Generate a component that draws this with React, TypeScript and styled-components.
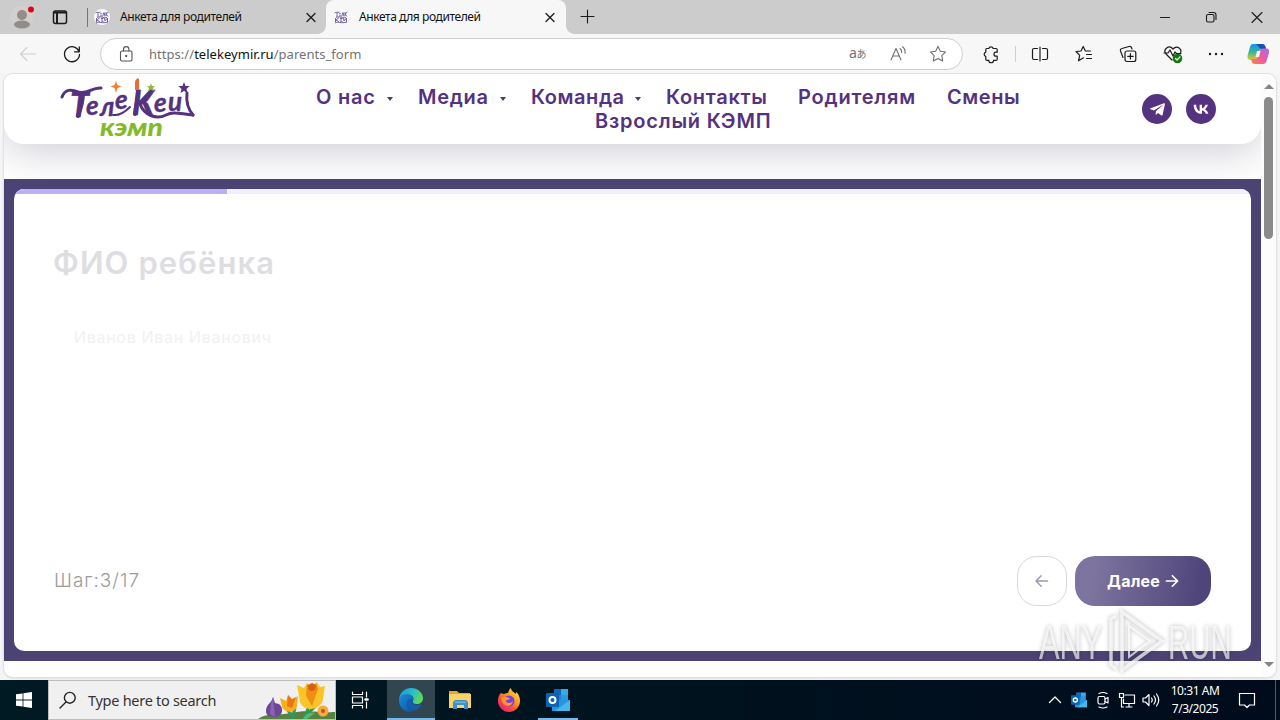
import React from "react";
import styled, { createGlobalStyle, css } from "styled-components";
import { FaTelegramPlane } from "react-icons/fa";

const theme = {
  colors: {
    strip: "#cccccc",
    chrome: "#f7f7f7",
    ink: "#1b1b1b",
    muted: "#6f6f6f",
    brand: "#54327f",
    plum: "#4c4375",
    lilac: "#bcb0f3",
  },
  ui: `"Noto Sans", "Open Sans", sans-serif`,
  site: `Inter, "Open Sans", sans-serif`,
};

const GlobalStyle = createGlobalStyle`
  * {
    box-sizing: border-box;
  }
  body {
    margin: 0;
    overflow: hidden;
    font-family: ${theme.ui};
  }
  svg {
    display: block;
    flex: none;
  }
`;

const Desktop = styled.div`
  position: relative;
  display: flex;
  flex-direction: column;
  width: 1280px;
  height: 720px;
  overflow: hidden;
  background: #f5f5f7;
`;

const Slot = styled.div<{ $w: number }>`
  display: flex;
  align-items: center;
  justify-content: center;
  flex: none;
  width: ${({ $w }) => $w}px;
  height: 100%;
`;

const Spacer = styled.div`
  flex: 1;
`;

/* Tab strip */

const TabStrip = styled.div`
  display: flex;
  height: 34px;
  flex: none;
  padding-left: 2px;
  background: ${theme.colors.strip};
`;

const Tab = styled.div<{ $active?: boolean }>`
  position: relative;
  display: flex;
  align-items: center;
  width: ${({ $active }) => ($active ? 240 : 239)}px;
  height: 34px;
  padding-left: 7px;
  ${({ $active }) =>
    $active
      ? css`
          background: ${theme.colors.chrome};
          border-radius: 8px 8px 0 0;
          &::before,
          &::after {
            content: "";
            position: absolute;
            bottom: 0;
            width: 8px;
            height: 8px;
          }
          &::before {
            left: -8px;
            background: radial-gradient(
              circle at 0 0,
              transparent 7.5px,
              ${theme.colors.chrome} 8px
            );
          }
          &::after {
            right: -8px;
            background: radial-gradient(
              circle at 100% 0,
              transparent 7.5px,
              ${theme.colors.chrome} 8px
            );
          }
        `
      : css`
          &::before {
            content: "";
            width: 1px;
            height: 19px;
            margin: 0 6px 0 -7px;
            background: #777;
          }
        `}
`;

const TabTitle = styled.span`
  flex: 1;
  margin-left: 10px;
  padding-bottom: 1px;
  font-size: 12px;
  letter-spacing: -0.42px;
  white-space: nowrap;
  color: #111;
`;

/* Toolbar */

const Toolbar = styled.div`
  display: flex;
  align-items: center;
  height: 39px;
  flex: none;
  padding: 0 2px 0 8px;
  background: ${theme.colors.chrome};
`;

const AddressBar = styled.div`
  display: flex;
  align-items: center;
  width: 863px;
  height: 32px;
  margin: 1px 8px 0;
  padding: 0 4px 0 10px;
  border: 1px solid #cfcfcf;
  border-radius: 16px;
  background: white;
`;

const Url = styled.span`
  flex: 1;
  margin-left: 9px;
  font-size: 13px;
  letter-spacing: 0.04px;
  color: #737373;
  b {
    font-weight: 400;
    color: #111;
  }
`;

const Divider = styled.div`
  width: 1px;
  height: 16px;
  margin: 0 4px;
  background: #cfcfcf;
`;

/* Web page */

const PageFrame = styled.div`
  display: flex;
  width: 1272px;
  height: 603px;
  flex: none;
  margin: 1px 0 0 4px;
  overflow: hidden;
  border-radius: 9px;
  background: white;
  box-shadow: 0 0 0 1px #e2e2e4, 0 1px 3px rgba(0, 0, 0, 0.16);
`;

const Page = styled.div`
  display: flex;
  flex-direction: column;
  width: 1257px;
  font-family: ${theme.site};
`;

const SiteHeader = styled.header`
  display: flex;
  height: 70px;
  flex: none;
  padding-left: 52px;
  border-radius: 0 0 20px 20px;
  background: white;
  box-shadow: 0 8px 40px rgba(35, 30, 65, 0.22);
`;

const Nav = styled.nav`
  display: flex;
  flex-direction: column;
  width: 719px;
  margin-left: 105px;
  padding-top: 11px;
  font-size: 20px;
  font-weight: 600;
  line-height: 24px;
  color: ${theme.colors.brand};
`;

const NavRow = styled.div<{ $second?: boolean }>`
  display: flex;
  padding-left: ${({ $second }) => ($second ? 279 : 0)}px;
`;

const NavItem = styled.a<{ $w: number; $spacing: number; $menu?: boolean }>`
  display: flex;
  align-items: center;
  width: ${({ $w }) => $w}px;
  white-space: nowrap;
  letter-spacing: ${({ $spacing }) => $spacing}px;
  ${({ $menu }) =>
    $menu &&
    css`
      justify-content: space-between;
      padding-right: 25px;
      &::after {
        content: "";
        margin-top: 4px;
        border: 3px solid transparent;
        border-top: 4px solid ${theme.colors.brand};
        border-bottom: 0;
      }
    `}
`;

const Socials = styled.div`
  display: flex;
  gap: 14px;
  margin: 20px 0 0 120px;
`;

const SocialLink = styled.a`
  display: flex;
  align-items: center;
  justify-content: center;
  width: 30px;
  height: 30px;
  border-radius: 50%;
  color: white;
  background: ${theme.colors.brand};
`;

const FormSection = styled.section`
  height: 482px;
  flex: none;
  margin-top: 35px;
  padding: 10px;
  background: ${theme.colors.plum};
`;

const Card = styled.div`
  display: flex;
  flex-direction: column;
  height: 462px;
  overflow: hidden;
  border-radius: 10px;
  background: white;
`;

const Progress = styled.div`
  height: 5px;
  flex: none;
  background: #f1effc;
  &::before {
    content: "";
    display: block;
    width: 213px;
    height: 5px;
    background: ${theme.colors.lilac};
  }
`;

const Question = styled.h1`
  margin: 50px 0 0 39px;
  font-size: 31px;
  font-weight: 600;
  line-height: 38px;
  letter-spacing: 1.1px;
  color: #dedee2;
`;

const Placeholder = styled.div`
  margin: 43px 0 0 60px;
  font-size: 16px;
  line-height: 24px;
  letter-spacing: 0.7px;
  color: #f1f1f3;
`;

const CardFooter = styled.div`
  display: flex;
  align-items: center;
  height: 50px;
  margin: auto 40px 45px;
`;

const Step = styled.span`
  flex: 1;
  padding-bottom: 2px;
  font-size: 19px;
  font-weight: 300;
  letter-spacing: 1px;
  color: #9b9b9b;
`;

const StepButton = styled.button<{ $primary?: boolean }>`
  display: flex;
  align-items: center;
  justify-content: center;
  gap: 5px;
  height: 50px;
  width: ${({ $primary }) => ($primary ? 136 : 50)}px;
  margin-left: ${({ $primary }) => ($primary ? 8 : 0)}px;
  padding: 0;
  border: ${({ $primary }) => ($primary ? "0" : "1px solid #d8d6e0")};
  border-radius: 20px;
  font: 700 16px ${theme.site};
  letter-spacing: 0.2px;
  color: ${({ $primary }) => ($primary ? "white" : "#9d97b8")};
  background: ${({ $primary }) =>
    $primary ? "linear-gradient(100deg, #7d749f 15%, #50457a 90%)" : "white"};
`;

const Scrollbar = styled.div`
  display: flex;
  flex-direction: column;
  align-items: center;
  width: 15px;
  padding: 10px 0 10px;
  background: #fcfcfc;
  &::before,
  &::after {
    content: "";
    border: 5px solid transparent;
  }
  &::before {
    border-top: 0;
    border-bottom: 5px solid #858585;
  }
  &::after {
    margin-top: auto;
    border-bottom: 0;
    border-top: 5px solid #858585;
  }
`;

const Thumb = styled.div`
  width: 9px;
  height: 142px;
  margin-top: 8px;
  border-radius: 5px;
  background: #8b8b8b;
`;

const Watermark = styled.svg`
  position: absolute;
  left: 1034px;
  top: 604px;
  filter: drop-shadow(0 0 2px rgba(0, 0, 0, 0.4));
`;

/* Taskbar */

const Taskbar = styled.footer`
  display: flex;
  align-items: center;
  height: 40px;
  flex: none;
  margin-top: 3px;
  color: white;
  background: linear-gradient(90deg, #001a23, #00141f 45%, #000b1c);
`;

const SearchBox = styled.div`
  display: flex;
  align-items: center;
  width: 288px;
  height: 40px;
  padding-left: 9px;
  border: 1px solid #bdbdbd;
  background: #f0f0f0;
  color: #343434;
  font-size: 14.5px;
  letter-spacing: -0.28px;
  span {
    flex: 1;
    margin-left: 10px;
    white-space: nowrap;
  }
`;

const AppButton = styled.div<{ $active?: boolean; $open?: boolean }>`
  display: flex;
  flex-direction: column;
  align-items: center;
  width: 48px;
  height: 40px;
  margin-left: ${({ $active }) => ($active ? 3 : 1)}px;
  padding-top: 8px;
  background: ${({ $active }) => ($active ? "#32464f" : "transparent")};
  &::after {
    content: "";
    width: ${({ $active }) => ($active ? 48 : 40)}px;
    height: 2px;
    margin-top: auto;
    background: ${({ $active, $open }) =>
      $active || $open ? "#76b9ed" : "transparent"};
  }
`;

const Clock = styled.div`
  width: 64px;
  font-size: 12px;
  line-height: 18px;
  letter-spacing: -0.45px;
  text-align: center;
  white-space: nowrap;
`;

const TrayEdge = styled.div`
  width: 1px;
  height: 40px;
  margin: 0 4px 0 8px;
  background: #525a68;
`;

type LineIconProps = {
  size?: number;
  color?: string;
  width?: number;
  children: React.ReactNode;
};

const LineIcon = ({
  size = 20,
  color = theme.colors.ink,
  width = 1.1,
  children,
}: LineIconProps) => (
  <svg
    width={size}
    height={size}
    viewBox="0 0 20 20"
    fill="none"
    stroke={color}
    strokeWidth={width}
    strokeLinecap="round"
    strokeLinejoin="round"
  >
    {children}
  </svg>
);

const CloseIcon = ({ size = 20 }: { size?: number }) => (
  <LineIcon size={size} width={1.3}>
    <path d="M6 6.5l8 8M14 6.5l-8 8" />
  </LineIcon>
);

const STAR =
  "M10 2.4l2.35 4.8 5.25.75-3.8 3.7.9 5.25-4.7-2.5-4.7 2.5.9-5.25-3.8-3.7 5.25-.75z";

const Favicon = () => (
  <svg width="16" height="16" viewBox="0 0 16 16">
    <circle cx="8" cy="8" r="8" fill="#fafafa" />
    <g fill="none" stroke="#7563a6" strokeWidth="1">
      <path d="M1.500 4c2-1.500 3 0 5-1M4 4v4M6 5l1.800-.5M6 7l2-.2M8.500 7.500l1.500-4 1 4M12 3v4M14.500 3l-2.500 2 2 2.500" />
      <path d="M2.500 9v4M6 8.500l-3 2.500 3 2M7 9.500h2.500M7 11h2M7 13l2.500-.5M10.500 9l.5 3 2.500-3v4M2 14c3-2 6 1 12-1M3 8.500c4-2 6 1 10 0" />
    </g>
  </svg>
);

const ProfileIcon = () => (
  <svg width="26" height="26" viewBox="0 0 26 26">
    <circle cx="13" cy="13" r="11.5" fill="#d2cfcc" />
    <circle cx="13" cy="11" r="5" fill="#918d8b" />
    <ellipse cx="13" cy="20.5" rx="8" ry="4" fill="#918d8b" />
    <circle cx="22" cy="5.5" r="4" fill="#d5cdcd" />
    <circle cx="22" cy="5.5" r="3" fill="#db0719" />
  </svg>
);

const LogoName = styled.text`
  fill: ${theme.colors.brand};
  stroke: ${theme.colors.brand};
  stroke-width: 0.4px;
  font-family: Lato, sans-serif;
  font-size: 26px;
  font-style: italic;
  font-weight: 700;
`;

const SiteLogo = () => (
  <svg width="142" height="66" viewBox="0 1 142 66">
    <LogoName>
      <tspan x="14" y="44" fontSize="34">Т</tspan>
      <tspan x="30" y="42">е</tspan>
      <tspan x="44" y="43">л</tspan>
      <tspan x="59" y="36">е</tspan>
      <tspan x="76" y="42" style={undefined} fontSize="34">К</tspan>
      <tspan x="98" y="39">е</tspan>
      <tspan x="112" y="38">и</tspan>
    </LogoName>
    <g fill="none" stroke={theme.colors.brand} strokeLinecap="round">
      <path strokeWidth="3" d="M6 24c3-8 9-8 16-5 9 3 14-5 23-4" />
      <path strokeWidth="4" d="M27 20c0 8-2 15-5 23" />
      <path strokeWidth="4" d="M82 18c0 8-2 15-3 23M84 30l11-12" />
      <path strokeWidth="2" d="M57 42c7 1 12-3 17-8" />
      <path strokeWidth="3" d="M84 31c4 11 16 16 26 11 8-4 14-1 27 0" />
      <path strokeWidth="3" d="M131 20c-1 8 1 16 6 22" />
    </g>
    <path d="M79 9c1-4 5-6 4 0v8h-4z" fill="#ec6c2d" />
    <path d="M60 8l1.500 4 4 1.500-4 1.500-1.500 5-1.500-5-4-1.500 4-1.500z" fill="#ef8236" />
    <path d="M95 10l1 3h3l-2 2 1 3.500-3-2-3 2 1-3.500-2-2h3z" fill="#93b842" />
    <path
      d="M128 9l1.500 4h4l-3 3 1 4-3.500-2-3.500 2 1-4-3-3h4z"
      fill={theme.colors.brand}
    />
    <text
      x="44"
      y="63"
      textLength="63"
      lengthAdjust="spacingAndGlyphs"
      fill="#84b927"
      fontFamily="Lato, sans-serif"
      fontSize="24"
      fontStyle="italic"
      fontWeight="900"
    >
      кэмп
    </text>
  </svg>
);

const VkIcon = () => (
  <svg width="22" height="22" viewBox="0 0 24 24" fill="currentColor">
    <path d="M6.79 7.3H4.05c.13 6.24 3.25 9.99 8.72 9.99h.31v-3.57c2.01.2 3.53 1.67 4.14 3.57h2.84c-.78-2.84-2.83-4.41-4.11-5.01 1.28-.74 3.08-2.54 3.51-4.98h-2.58c-.56 1.98-2.22 3.78-3.8 3.95V7.3H10.5v6.92c-1.6-.4-3.62-2.34-3.71-6.92Z" />
  </svg>
);

const CopilotIcon = () => (
  <svg width="24" height="24" viewBox="0 0 24 24">
    <defs>
      <linearGradient id="cpA" x1="0" y1="0" x2="0" y2="1">
        <stop offset="0" stopColor="#1795e8" />
        <stop offset=".5" stopColor="#33b69a" />
        <stop offset="1" stopColor="#e8ca22" />
      </linearGradient>
      <linearGradient id="cpB" x1="1" y1="0" x2="0" y2="1">
        <stop offset="0" stopColor="#a66be6" />
        <stop offset=".5" stopColor="#ee5aa0" />
        <stop offset="1" stopColor="#fb8645" />
      </linearGradient>
    </defs>
    <path
      d="M7 2h9c2 0 3 1 3.500 3l.6 2h-4c-2 0-2.500 1-3 3l-1.500 5c-.5 2-1.500 3-3.500 3H5c-3 0-4-2-3.300-5l2-7C4.500 3.500 5 2 7 2z"
      fill="url(#cpA)"
    />
    <path d="M10 2h6c2 0 3 1 3.500 3l.6 2h-4c-2 0-3-1-3.500-2.500z" fill="#1750b8" />
    <path
      d="M17 22H9c-2 0-3-1-3.500-3L5 17h4c2 0 2.500-1 3-3l1.400-4c.5-2 1.500-3.500 3.500-3.500H20c3 0 3.500 2 2.800 5l-2 6.500c-.7 2.500-1.600 4-3.800 4z"
      fill="url(#cpB)"
    />
    <path d="M11 9h3.500l-1.500 6H9.500z" fill="#f7f7f7" />
  </svg>
);

const SearchArt = () => (
  <svg width="80" height="38" viewBox="-3 0 80 38">
    <path d="M0 38c10-7 20-3 33-6 16-4 25 0 47-1v7z" fill="#568344" />
    <path d="M8 30c0-7 6-8 7-14l2 6 4 1c5 4 4 12-3 13-6 0-10-1-10-6z" fill="#6b4895" />
    <path d="M15 16l2 20-5-3 1-10z" fill="#8c62b3" />
    <path d="M37 27l-3 11M53 20l-7 18M36 37l-8-10M47 35l14-13" stroke="#33965b" strokeWidth="3" fill="none" />
    <path d="M22 17l6 3 2-6 4 5 6-4-1 10c-1 7-12 8-15 1z" fill="#f8af19" />
    <path d="M30 14l4 4 4-2-4 11-5-2z" fill="#e97718" />
    <path d="M39 4l7 3 3-5 5 4 5-5 3 5 5-1-2 13c-1 11-19 14-23 3z" fill="#fdc426" />
    <path d="M49 3l5 4 4-5 2 6-6 17-6-10z" fill="#ee8d17" />
    <path d="M50 4l4-2 4 2-1 5-4 1-3-2z" fill="#dd5c16" />
    <circle cx="65" cy="30" r="5.500" fill="#f6ab40" />
    <circle cx="65" cy="30" r="2" fill="#bd570d" />
    <path d="M45 38c3-6 7-7 12-6l-8 6z" fill="#54b871" />
  </svg>
);

const EdgeIcon = () => (
  <svg width="24" height="24" viewBox="0 0 24 24">
    <defs>
      <linearGradient id="edA" x1="0" y1="0" x2="1" y2=".4">
        <stop offset="0" stopColor="#1798d8" />
        <stop offset=".6" stopColor="#29bfc4" />
        <stop offset="1" stopColor="#5bd85f" />
      </linearGradient>
      <linearGradient id="edB" x1="0" y1="0" x2="1" y2="1">
        <stop offset="0" stopColor="#1b8fdd" />
        <stop offset="1" stopColor="#0b4b9e" />
      </linearGradient>
    </defs>
    <path d="M0 11C1 4 6 0 12 0c7 0 12 5 12 10 0 4-3 6-6 6-3 0-5-1-4-3 2-4-2-7-6-6-4 0-7 2-8 4z" fill="url(#edA)" />
    <path d="M0 12c0-3 3-6 8-6 4 0 7 3 6 6-3-2-6 0-6 4 0 5 5 7 9 7-8 3-17-1-17-11z" fill="url(#edB)" />
    <path d="M8 15c0-3 2-4 4-4 2 0 2 1 2 2-1 2 1 4 4 4 2 0 3-1 4-1 1 1-2 6-7 6.500-4 0-7-3-7-7.500z" fill="#125eab" />
  </svg>
);

const ExplorerIcon = () => (
  <svg width="24" height="24" viewBox="0 0 24 24">
    <path d="M1 3h8l2 2h11v15H1z" fill="#e9a52b" />
    <path d="M1 6h22v14H1z" fill="#fbd467" />
    <path d="M5 21v-7l2-2h11l2 2v7h-4v-4H9v4z" fill="#3f8fcc" />
    <path d="M7 13.500h11v1.500H7z" fill="#6db4e2" />
  </svg>
);

const FirefoxIcon = () => (
  <svg width="24" height="24" viewBox="0 0 24 24">
    <defs>
      <linearGradient id="ffA" x1="1" y1="0" x2=".2" y2="1">
        <stop offset="0" stopColor="#fff34d" />
        <stop offset=".4" stopColor="#ffa31d" />
        <stop offset=".7" stopColor="#ff4b3e" />
        <stop offset="1" stopColor="#e61b87" />
      </linearGradient>
    </defs>
    <path d="M4 5c1 0 1 1 3 1 2-1 3-1 4-1 1-2 1-4 3-5 0 3 3 4 5 6V4c3 2 4 6 4 9 0 6-5 11-11 11S1 19 1 13c0-4 1-6 3-8z" fill="url(#ffA)" />
    <circle cx="12" cy="13" r="5.500" fill="#7542e5" />
    <path d="M4 10c2-2 5-1 8 0 2 1 0 2-2 2s-1 3 2 3 4-2 4-2c-1 7-10 7-12-3z" fill="#ff9828" />
  </svg>
);

const OutlookIcon = ({ size = 24 }: { size?: number }) => (
  <svg width={size} height={size} viewBox="0 0 24 24">
    <path d="M8 1h14v11H8z" fill="#1c82d2" />
    <path d="M8 1h7v6H8z" fill="#1067b8" />
    <path d="M15 1h7v6h-7z" fill="#38a9e9" />
    <path d="M15 7h7v6h-7z" fill="#2f97dc" />
    <path d="M6 12h18v11H6z" fill="#2895df" />
    <path d="M24 12v11H9z" fill="#42b8ed" />
    <rect y="5" width="13" height="14" rx="1" fill="#0c62b5" />
    <circle cx="6.500" cy="12" r="3" fill="none" stroke="white" strokeWidth="2" />
  </svg>
);

const WindowsIcon = () => (
  <svg width="16" height="16" viewBox="0 0 16 16" fill="white">
    <path d="M0 2.300l6.600-.9v6.200H0zM7.400 1.300L16 0v7.600H7.400zM0 8.400h6.600v6.200L0 13.700zM7.400 8.400H16V16l-8.600-1.200z" />
  </svg>
);

const AnyRunMark = () => (
  <Watermark width="204" height="74" viewBox="0 0 204 74">
    <g
      fill="rgba(255,255,255,.66)"
      fontFamily="'Liberation Sans', sans-serif"
      fontSize="49"
    >
      <text transform="translate(5 55) scale(.63 1)">ANY</text>
      <text transform="translate(134 55) scale(.6 1)">RUN</text>
    </g>
    <g fill="none" stroke="rgba(255,255,255,.72)" strokeWidth="3.500">
      <path d="M88 8v58l40-29z" />
      <path d="M95 22v31l21-16z" strokeWidth="2" />
      <path d="M82 12l-5 3v46l5 4" />
    </g>
  </Watermark>
);

const App = () => (
  <Desktop>
    <GlobalStyle />
    <TabStrip>
      <Slot $w={40}>
        <ProfileIcon />
      </Slot>
      <Slot $w={36}>
        <LineIcon width={1.5}>
          <rect x="3.500" y="4" width="13" height="12.500" rx="2" />
          <path d="M4 5.500h12M7 7v9" strokeWidth="2" />
        </LineIcon>
      </Slot>
      <Slot $w={9} />
      <Tab>
        <Favicon />
        <TabTitle>Анкета для родителей</TabTitle>
        <Slot $w={30}>
          <CloseIcon />
        </Slot>
      </Tab>
      <Tab $active>
        <Favicon />
        <TabTitle>Анкета для родителей</TabTitle>
        <Slot $w={32}>
          <CloseIcon />
        </Slot>
      </Tab>
      <Slot $w={42}>
        <LineIcon>
          <path d="M10.500 3v13M4 9.500h13" />
        </LineIcon>
      </Slot>
      <Spacer />
      <Slot $w={46}>
        <LineIcon>
          <path d="M5.500 10.500h9" />
        </LineIcon>
      </Slot>
      <Slot $w={46}>
        <LineIcon>
          <rect x="5.500" y="7.500" width="7.500" height="7.500" rx="1.500" />
          <path d="M8 5.500h4.500q2.500 0 2.500 2.500v4.500" />
        </LineIcon>
      </Slot>
      <Slot $w={46}>
        <LineIcon>
          <path d="M5 5.500l10 10M15 5.500l-10 10" />
        </LineIcon>
      </Slot>
    </TabStrip>

    <Toolbar>
      <Slot $w={40}>
        <LineIcon color="#cfcfcf">
          <path d="M17.500 10h-15M9 3.500L2.500 10 9 16.500" />
        </LineIcon>
      </Slot>
      <Slot $w={4} />
      <Slot $w={40}>
        <LineIcon width={1.3}>
          <path d="M17 7.500A7.500 7.500 0 1 0 17.500 10.500M17.300 3v4.800h-4.800" />
        </LineIcon>
      </Slot>
      <AddressBar>
        <Slot $w={29}>
          <LineIcon color="#555">
            <rect x="4.500" y="7" width="11.500" height="10" rx="1.500" />
            <path d="M7.500 7V5.300a2.700 2.700 0 0 1 5.400 0V7" />
            <circle cx="10.200" cy="12" r=".6" fill="#555" />
          </LineIcon>
        </Slot>
        <Url>
          https://<b>telekeymir.ru</b>/parents_form
        </Url>
        <Slot $w={40}>
          <svg width="20" height="20" viewBox="0 0 20 20">
            <text x="1" y="14" fontSize="14" fontFamily="'Noto Sans', sans-serif" fill="#707070">
              a
            </text>
            <text x="8.500" y="14" fontSize="10" fontFamily="'Noto Sans CJK JP', sans-serif" fill="#707070">
              あ
            </text>
          </svg>
        </Slot>
        <Slot $w={40}>
          <LineIcon color={theme.colors.muted}>
            <path d="M3 16L8 4.500 13 16M4.800 12h6.500M12 4.500q2 1.500 1.600 4M14.500 2.800q3.200 2.500 2.500 6.500" />
          </LineIcon>
        </Slot>
        <Slot $w={40}>
          <LineIcon color={theme.colors.muted}>
            <path d={STAR} />
          </LineIcon>
        </Slot>
      </AddressBar>
      <Slot $w={40}>
        <LineIcon width={1.2}>
          <path d="M5.800 4.500h2a2.300 2.300 0 0 1 4.400 0H15q1.200 0 1.200 1.200v2.500h-1.200a2 2 0 0 0 0 4h1.200v3q0 1.200-1.200 1.200h-2.500a2.300 2.300 0 0 1-4.700 0H6q-1.200 0-1.200-1.200v-2.700a2.300 2.300 0 0 1 0-4.400V5.700q0-1.200 1-1.200" />
        </LineIcon>
      </Slot>
      <Divider />
      <Slot $w={40}>
        <LineIcon width={1.2}>
          <path d="M10 3v14M7.500 4.500H4q-1.500 0-1.500 1.500v8q0 1.500 1.500 1.500h3.500M12.500 4.500H16q1.500 0 1.500 1.500v8q0 1.500-1.500 1.500h-3.500" />
        </LineIcon>
      </Slot>
      <Slot $w={4} />
      <Slot $w={40}>
        <LineIcon width={1.2}>
          <path d="M9.500 13.800l-5 3 1.200-5.500L2 7.500 7 7l2.200-4.500L11.400 7h5M12.500 10.500h5M12.500 14.500h5" />
        </LineIcon>
      </Slot>
      <Slot $w={4} />
      <Slot $w={40}>
        <LineIcon width={1.2}>
          <rect x="7" y="7" width="10.800" height="10.500" rx="2" />
          <path d="M12.400 9.500v5.500M9.700 12.300h5.500M5 13.500L2.500 7q-.5-2 1.500-2.500l7-2q2-.5 2.700 1.500l.3 1" />
        </LineIcon>
      </Slot>
      <Slot $w={4} />
      <Slot $w={42}>
        <LineIcon width={1.2}>
          <path d="M9 16L3 10C-.5 5 6 .5 10 5c4-4.500 10 0 7 5M1 9h4l2-3 3 6 2-4 1.500 1.500H18" />
          <circle cx="14.500" cy="14.500" r="4.200" fill="#107c10" stroke="#107c10" />
          <path d="M12.500 14.500l1.500 1.500 3-3" stroke="white" />
        </LineIcon>
      </Slot>
      <Slot $w={2} />
      <Slot $w={40}>
        <LineIcon>
          <g fill="#1b1b1b" stroke="none">
            <circle cx="4" cy="10" r="1.200" />
            <circle cx="10" cy="10" r="1.200" />
            <circle cx="16" cy="10" r="1.200" />
          </g>
        </LineIcon>
      </Slot>
      <Slot $w={2} />
      <Slot $w={40}>
        <CopilotIcon />
      </Slot>
    </Toolbar>

    <PageFrame>
      <Page>
        <SiteHeader>
          <SiteLogo />
          <Nav>
            <NavRow>
              <Slot $w={13} />
              <NavItem $w={102} $spacing={0.8} $menu>О нас</NavItem>
              <NavItem $w={113} $spacing={0.7} $menu>Медиа</NavItem>
              <NavItem $w={135} $spacing={0.55} $menu>Команда</NavItem>
              <NavItem $w={132} $spacing={0.7}>Контакты</NavItem>
              <NavItem $w={149} $spacing={0.8}>Родителям</NavItem>
              <NavItem $w={75} $spacing={0.55}>Смены</NavItem>
            </NavRow>
            <NavRow $second>
              <Slot $w={13} />
              <NavItem $w={180} $spacing={0.8}>Взрослый КЭМП</NavItem>
            </NavRow>
          </Nav>
          <Socials>
            <SocialLink>
              <FaTelegramPlane size={17} />
            </SocialLink>
            <SocialLink>
              <VkIcon />
            </SocialLink>
          </Socials>
        </SiteHeader>
        <FormSection>
          <Card>
            <Progress />
            <Question>ФИО ребёнка</Question>
            <Placeholder>Иванов Иван Иванович</Placeholder>
            <CardFooter>
              <Step>Шаг:3/17</Step>
              <StepButton>
                <LineIcon size={16} color="currentColor" width={1.8}>
                  <path d="M17 10H3M9 3.500L2.500 10 9 16.500" />
                </LineIcon>
              </StepButton>
              <StepButton $primary>
                Далее
                <LineIcon size={14} color="currentColor" width={2.4}>
                  <path d="M2 10h15M10.500 2.500L18 10l-7.500 7.500" />
                </LineIcon>
              </StepButton>
            </CardFooter>
          </Card>
        </FormSection>
      </Page>
      <Scrollbar>
        <Thumb />
      </Scrollbar>
    </PageFrame>

    <Taskbar>
      <Slot $w={48}>
        <WindowsIcon />
      </Slot>
      <SearchBox>
        <LineIcon color="#222" width={1.4}>
          <circle cx="11.800" cy="7.800" r="5.400" />
          <path d="M8 12l-6 6" />
        </LineIcon>
        <span>Type here to search</span>
        <SearchArt />
      </SearchBox>
      <Slot $w={48}>
        <LineIcon color="white" width={1.2}>
          <path d="M2.500 2v2.500h10V2M2.500 18v-2.500h10V18M2.500 7h10v6h-10zM16.500 2v5M16.500 12v6" />
          <path d="M15.500 9.500h2" strokeWidth="2.500" />
        </LineIcon>
      </Slot>
      <AppButton $active>
        <EdgeIcon />
      </AppButton>
      <AppButton>
        <ExplorerIcon />
      </AppButton>
      <AppButton>
        <FirefoxIcon />
      </AppButton>
      <AppButton $open>
        <OutlookIcon />
      </AppButton>
      <Spacer />
      <Slot $w={24}>
        <LineIcon color="white" width={1.3}>
          <path d="M4.500 12.500L10 7l5.500 5.500" />
        </LineIcon>
      </Slot>
      <Slot $w={24}>
        <OutlookIcon size={16} />
      </Slot>
      <Slot $w={24}>
        <LineIcon color="white" width={1.2}>
          <rect x="5" y="6.500" width="7" height="7.500" rx="1.500" />
          <path d="M12 9l3-1.500v5.500L12 11.500M6 3.500q4-2 8 0M6 17q4 2 8 0" />
        </LineIcon>
      </Slot>
      <Slot $w={24}>
        <LineIcon color="white" width={1.2}>
          <path d="M8 5h9.500v8.500H6.500V9M9 17h6M12 13.500V17M2.500 3.500h4v4h-4zM4.500 7.500V17h2" />
        </LineIcon>
      </Slot>
      <Slot $w={24}>
        <LineIcon color="white" width={1.2}>
          <path d="M2 8v4h2.500L8 15.500v-11L4.500 8zM10.500 8q1.500 2 0 4M13 6q3 4 0 8M15.500 4q4.500 6 0 12" />
        </LineIcon>
      </Slot>
      <Clock>
        10:31 AM
        <br />
        7/3/2025
      </Clock>
      <Slot $w={40}>
        <LineIcon color="white" width={1.2}>
          <path d="M2.500 3.500h15v11.500h-5L10 17.500 7.500 15h-5z" />
        </LineIcon>
      </Slot>
      <TrayEdge />
    </Taskbar>
    <AnyRunMark />
  </Desktop>
);

export default App;
